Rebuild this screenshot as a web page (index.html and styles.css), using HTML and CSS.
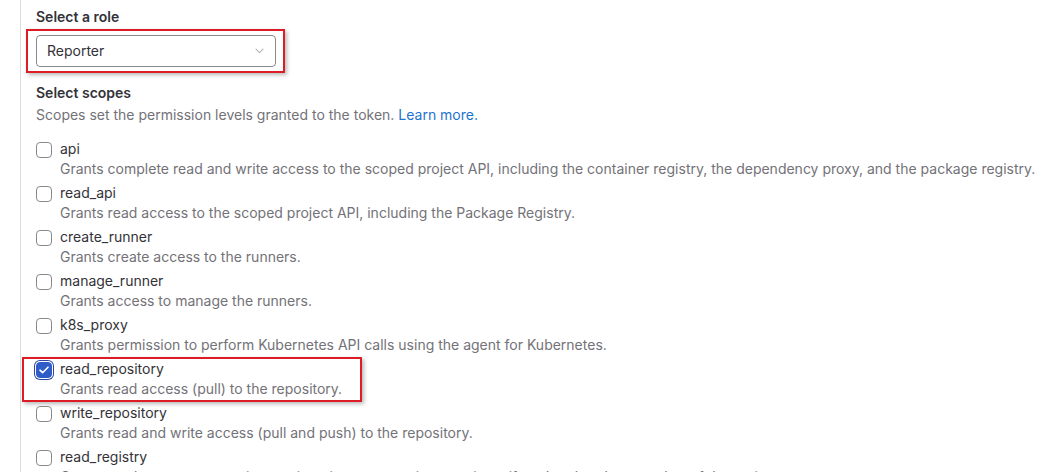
FILE: index.html
```html
<!DOCTYPE html>
<html>
<head>
<meta charset="utf-8">
<link rel="stylesheet" href="styles.css">
</head>
<body>
<div class="page">
  <div class="form">
    <div class="field-label">Select a role</div>
    <div class="select-wrap">
      <div class="select">
        <span>Reporter</span>
        <svg class="chev" width="9" height="6" viewBox="0 0 9 6"><path d="M1 1.2l3.5 3.5 3.5-3.5" fill="none" stroke="#b5b4b9" stroke-width="1.1" stroke-linecap="round" stroke-linejoin="round"/></svg>
      </div>
      <div class="highlight hl-select"></div>
    </div>

    <div class="field-label scopes-label">Select scopes</div>
    <div class="help">Scopes set the permission levels granted to the token. <a class="link" href="#">Learn more.</a></div>

    <ul class="scopes">
      <li class="scope">
        <span class="cb"></span>
        <div class="scope-text"><div class="name">api</div><div class="desc">Grants complete read and write access to the scoped project API, including the container registry, the dependency proxy, and the package registry.</div></div>
      </li>
      <li class="scope">
        <span class="cb"></span>
        <div class="scope-text"><div class="name">read_api</div><div class="desc">Grants read access to the scoped project API, including the Package Registry.</div></div>
      </li>
      <li class="scope">
        <span class="cb"></span>
        <div class="scope-text"><div class="name">create_runner</div><div class="desc">Grants create access to the runners.</div></div>
      </li>
      <li class="scope">
        <span class="cb"></span>
        <div class="scope-text"><div class="name">manage_runner</div><div class="desc">Grants access to manage the runners.</div></div>
      </li>
      <li class="scope">
        <span class="cb"></span>
        <div class="scope-text"><div class="name">k8s_proxy</div><div class="desc">Grants permission to perform Kubernetes API calls using the agent for Kubernetes.</div></div>
      </li>
      <li class="scope">
        <span class="cb checked"><svg width="10" height="8" viewBox="0 0 10 8"><path d="M1 4.2l2.6 2.5L9 1.2" fill="none" stroke="#fff" stroke-width="1.6" stroke-linecap="round" stroke-linejoin="round"/></svg></span>
        <div class="scope-text"><div class="name">read_repository</div><div class="desc">Grants read access (pull) to the repository.</div></div>
        <div class="highlight hl-scope"></div>
      </li>
      <li class="scope">
        <span class="cb"></span>
        <div class="scope-text"><div class="name">write_repository</div><div class="desc">Grants read and write access (pull and push) to the repository.</div></div>
      </li>
      <li class="scope">
        <span class="cb"></span>
        <div class="scope-text"><div class="name">read_registry</div><div class="desc">Grants read access to container registry images on private projects if you're already a member of the project.</div></div>
      </li>
    </ul>
  </div>
</div>
</body>
</html>
```

FILE: styles.css
```css
html, body {
  margin: 0;
  padding: 0;
  background: #fff;
}
body {
  width: 1049px;
  height: 472px;
  overflow: hidden;
  font-family: Inter, "Liberation Sans", sans-serif;
  font-size: 14px;
  line-height: 20px;
  color: #333238;
}
.page {
  margin-left: 20px;
  border-left: 1px solid #dcdcde;
  height: 100%;
  padding-top: 7px;
  box-sizing: border-box;
}
.form {
  padding-left: 15px;
}
.field-label {
  font-weight: 600;
  color: #333238;
}
.select-wrap {
  position: relative;
  width: 240px;
  margin-top: 8px;
}
.select {
  height: 32px;
  box-sizing: border-box;
  border: 1px solid #89888d;
  border-radius: 4px;
  display: flex;
  align-items: center;
  justify-content: space-between;
  padding: 0 11px 0 10px;
  color: #333238;
}
.chev {
  display: block;
}
.highlight {
  position: absolute;
  border: 2px solid #dd1c26;
  box-shadow: 2px 2px 4px rgba(0,0,0,0.28);
  pointer-events: none;
}
.hl-select {
  left: -10px;
  top: -6px;
  width: 255px;
  height: 40px;
}
.scopes-label {
  margin-top: 16px;
}
.help {
  margin-top: 2px;
  color: #737278;
}
.link {
  color: #1f75cb;
  text-decoration: none;
}
.scopes {
  list-style: none;
  margin: 14px 0 0 0;
  padding: 0;
}
.scope {
  position: relative;
  display: flex;
  align-items: flex-start;
  gap: 8px;
  margin-bottom: 4px;
}
.cb {
  flex: none;
  width: 16px;
  height: 16px;
  box-sizing: border-box;
  border: 1px solid #89888d;
  border-radius: 4px;
  margin-top: 3px;
  display: flex;
  align-items: center;
  justify-content: center;
  background: #fff;
}
.cb.checked {
  background: #2f5cc8;
  border-color: #2f5cc8;
  box-shadow: 0 0 0 1px #fff, 0 0 0 2px #2d44a6;
}
.scope-text .name {
  color: #333238;
}
.scope-text .desc {
  color: #737278;
  white-space: nowrap;
}
.hl-scope {
  left: -14px;
  top: -2px;
  width: 336px;
  height: 41px;
}
```
